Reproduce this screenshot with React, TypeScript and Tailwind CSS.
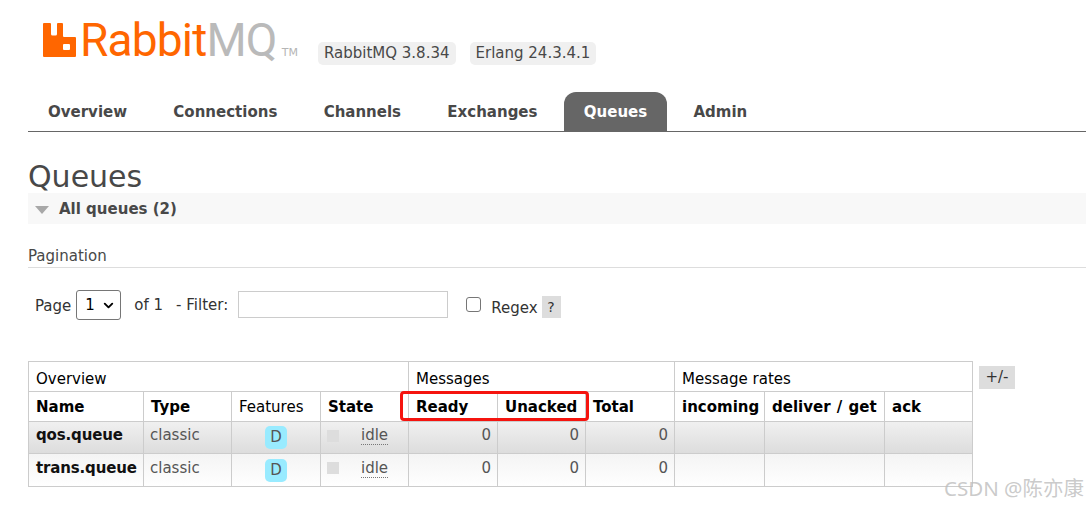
import { ChevronDown } from 'lucide-react';

const tabs = ['Overview', 'Connections', 'Channels', 'Exchanges', 'Queues', 'Admin'];

const queues = [
    { name: 'qos.queue', row: 'bg-gradient-to-b from-[#f0f0f0] to-[#dcdcdc]', h: 'h-[32px]' },
    { name: 'trans.queue', row: 'bg-gradient-to-b from-[#f4f4f4] to-[#ffffff]', h: 'h-[33px]' },
];

const th = 'border border-[#cccccc] px-[7px] text-left align-middle';

function RabbitIcon() {
    return (
        <svg width="33" height="34" viewBox="0 0 33 34" className="block shrink-0">
            <path
                fill="#ff6600"
                fillRule="evenodd"
                d="M0 1a1 1 0 0 1 1-1h6a1 1 0 0 1 1 1v10a1.500 1.500 0 0 0 1.500 1.500h3A1.500 1.500 0 0 0 14 11V1a1 1 0 0 1 1-1h4a1 1 0 0 1 1 1v12a1 1 0 0 0 1 1h11a1 1 0 0 1 1 1v18a1 1 0 0 1-1 1H1a1 1 0 0 1-1-1ZM20 22v4a1 1 0 0 0 1 1h5a1 1 0 0 0 1-1v-4a1 1 0 0 0-1-1h-5a1 1 0 0 0-1 1Z"
            />
        </svg>
    );
}

export default function App() {
    return (
        <div className="relative h-[505px] w-[1086px] overflow-hidden bg-white font-['DejaVu_Sans',sans-serif] text-[15px] text-[#484848]">
            <header className="flex h-[92px] items-start pl-[43px] pt-[23px]">
                <RabbitIcon />
                <div className="ml-[4px] flex h-[34px] items-center font-['Roboto',sans-serif] text-[46px] leading-none font-normal tracking-[-0.8px]">
                    <span className="text-[#ff6600]">Rabbit</span>
                    <span className="text-[#bababa]">MQ</span>
                </div>
                <span className="mt-[24px] ml-[5px] text-[11px] leading-none text-[#b5b5b5]">TM</span>
                <span className="mt-[19px] ml-[20px] rounded-[5px] bg-[#f0f0f0] px-[6px] py-[2px] text-[15px] leading-[19px]">RabbitMQ 3.8.34</span>
                <span className="mt-[19px] ml-[14px] rounded-[5px] bg-[#f0f0f0] px-[6px] py-[2px] text-[15px] leading-[19px]">Erlang 24.3.4.1</span>
            </header>

            <nav className="ml-[28px] flex h-[40px] items-end border-b border-[#666666]">
                {tabs.map((tab) => (
                    <span
                        key={tab}
                        className={`flex h-[39px] items-center rounded-t-[12px] px-[20px] pt-[1px] font-bold ${
                            tab === 'Queues' ? 'bg-[#666666] text-white' : 'text-[#484848]'
                        } ${tab === 'Overview' ? 'ml-0' : 'ml-[6.300px]'}`}
                    >
                        {tab}
                    </span>
                ))}
            </nav>

            <main className="pl-[28px]">
                <h1 className="mt-[27px] translate-y-[1px] text-[30px] leading-[34px] font-normal">Queues</h1>
                <div className="flex h-[31px] items-center bg-[#f8f8f8] pt-[2px] pl-[7px] font-bold">
                    <span className="mr-[10px] h-0 w-0 border-x-[7px] border-t-[8px] border-x-transparent border-t-[#a8a8a8]" />
                    All queues (2)
                </div>

                <div className="mt-[22px] h-[22px] border-b border-[#dddddd] text-[15px] leading-[20px]">Pagination</div>

                <div className="mt-[22px] flex h-[30px] items-center pl-[7px] text-[15px] text-[#333333]">
                    <span className="translate-y-[1px]">Page</span>
                    <span className="ml-[5px] flex h-[30px] w-[45px] items-center rounded-[3px] border border-[#767676] pl-[8px] text-black">
                        1
                        <ChevronDown size={15} strokeWidth={3} className="ml-[6px]" />
                    </span>
                    <span className="ml-[13px]">of 1</span>
                    <span className="ml-[13px]">- Filter:</span>
                    <span className="ml-[10px] h-[27px] w-[210px] -translate-y-[1px] border border-[#cccccc]" />
                    <span className="ml-[18px] h-[15px] w-[15px] -translate-y-[1px] rounded-[3px] border border-[#767676]" />
                    <span className="ml-[10px] translate-y-[3px]">Regex</span>
                    <span className="ml-[4px] flex h-[22px] w-[19px] translate-y-[2px] items-center justify-center bg-[#dddddd] text-[14px]">?</span>
                </div>

                <div className="mt-[41px] flex items-start text-black">
                    <table className="w-[944px] table-fixed border-collapse text-[15px]">
                        <colgroup>
                            <col className="w-[115px]" />
                            <col className="w-[88px]" />
                            <col className="w-[89px]" />
                            <col className="w-[88px]" />
                            <col className="w-[89px]" />
                            <col className="w-[88px]" />
                            <col className="w-[89px]" />
                            <col className="w-[90px]" />
                            <col className="w-[120px]" />
                            <col className="w-[88px]" />
                        </colgroup>
                        <thead>
                            <tr className="h-[30px]">
                                <th colSpan={4} className={`${th} pt-[6px] font-normal`}>Overview</th>
                                <th colSpan={3} className={`${th} pt-[6px] font-normal`}>Messages</th>
                                <th colSpan={3} className={`${th} pt-[6px] font-normal`}>Message rates</th>
                            </tr>
                            <tr className="h-[30px]">
                                <th className={`${th} pt-[2px]`}>Name</th>
                                <th className={`${th} pt-[2px]`}>Type</th>
                                <th className={`${th} pt-[2px] font-normal`}>Features</th>
                                <th className={`${th} pt-[2px]`}>State</th>
                                <th className={`${th} pt-[2px]`}>Ready</th>
                                <th className={`${th} pt-[2px]`}>Unacked</th>
                                <th className={`${th} pt-[2px]`}>Total</th>
                                <th className={`${th} pt-[2px]`}>incoming</th>
                                <th className={`${th} pt-[2px] whitespace-nowrap [word-spacing:1px]`}>deliver / get</th>
                                <th className={`${th} pt-[2px]`}>ack</th>
                            </tr>
                        </thead>
                        <tbody className="text-[#555555]">
                            {queues.map((q) => (
                                <tr key={q.name} className={`${q.h} ${q.row}`}>
                                    <td className="border border-[#cccccc] pb-[4px] pl-[7px] font-bold tracking-[-0.15px] whitespace-nowrap text-[#111111]">{q.name}</td>
                                    <td className="border border-[#cccccc] pb-[4px] pl-[6px]">classic</td>
                                    <td className="border border-[#cccccc] text-center">
                                        <span className="inline-flex h-[23px] w-[22px] items-center justify-center rounded-[5px] bg-[#99ebff] text-[#555555]">D</span>
                                    </td>
                                    <td className="border border-[#cccccc] pb-[4px] pl-[6px]">
                                        <span className="flex items-center">
                                            <span className="h-[12px] w-[12px] bg-[#dddddd]" />
                                            <span className="ml-[22px] border-b border-dotted border-[#777777] leading-[18px]">idle</span>
                                        </span>
                                    </td>
                                    <td className="border border-[#cccccc] pr-[6px] pb-[4px] text-right">0</td>
                                    <td className="border border-[#cccccc] pr-[6px] pb-[4px] text-right">0</td>
                                    <td className="border border-[#cccccc] pr-[6px] pb-[4px] text-right">0</td>
                                    <td className="border border-[#cccccc]" />
                                    <td className="border border-[#cccccc]" />
                                    <td className="border border-[#cccccc]" />
                                </tr>
                            ))}
                        </tbody>
                    </table>
                    <span className="mt-[5px] ml-[6px] flex h-[23px] w-[36px] items-center justify-center bg-[#dddddd] text-[15px] text-[#333333]">+/-</span>
                </div>
            </main>

            <div className="absolute top-[391px] left-[400px] h-[30px] w-[189px] rounded-[4px] border-[3px] border-[#f5140f]" />
            <span className="absolute top-[474px] left-[944px] font-['Noto_Sans','Noto_Sans_CJK_SC',sans-serif] text-[20.500px] leading-[28px] whitespace-nowrap text-[#bdbdbd]/80">CSDN @陈亦康</span>
        </div>
    );
}
